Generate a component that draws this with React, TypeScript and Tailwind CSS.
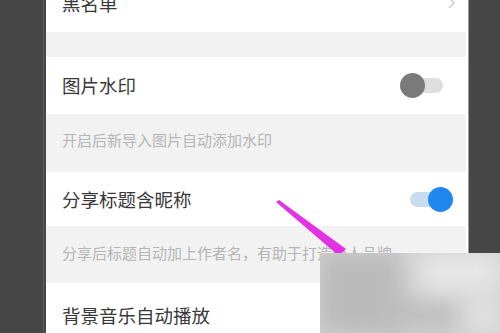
import React from 'react';

function Toggle({ on }: { on: boolean }) {
  if (on) {
    return (
      <div className="relative w-[43px] h-[25px] flex items-center">
        <div className="w-[36px] h-[15px] rounded-full bg-[#c9dcee]" />
        <div className="absolute right-0 top-0 w-[25px] h-[25px] rounded-full bg-[#1f87f0]" />
      </div>
    );
  }
  return (
    <div className="relative w-[43px] h-[25px] flex items-center justify-end">
      <div className="w-[35px] h-[15px] rounded-full bg-[#dedede]" />
      <div className="absolute left-0 top-0 w-[25px] h-[25px] rounded-full bg-[#7a7a7a]" />
    </div>
  );
}

export default function App() {
  return (
    <div
      className="relative w-[500px] h-[333px] overflow-hidden bg-[#464646] flex"
      style={{ fontFamily: '"Noto Sans CJK SC", "Noto Sans", sans-serif' }}
    >
      <div className="w-[43px]" />
      <div className="w-px bg-[#5e5e5e]" />
      <div className="w-[2px]" />

      {/* settings panel */}
      <div className="w-[420px] flex flex-col bg-[#f2f2f2]">
        <div className="h-[32px] bg-white flex items-start justify-between pl-[16px] pr-[10px]">
          <span className="text-[18.5px] leading-none text-[#383838] -mt-[6px]">黑名单</span>
          <svg width="8" height="12" viewBox="0 0 8 12" className="-mt-[3px]">
            <path d="M1 1l5 5-5 5" fill="none" stroke="#cfcfcf" strokeWidth="1.5" />
          </svg>
        </div>
        <div className="h-[25px]" />

        <div className="h-[57px] bg-white flex items-center justify-between pl-[16px] pr-[23px]">
          <span className="text-[18.5px] leading-none text-[#383838]">图片水印</span>
          <Toggle on={false} />
        </div>
        <div className="h-[58px] pl-[16px] pt-[13px]">
          <span className="text-[15px] leading-none text-[#b5b5b5]">开启后新导入图片自动添加水印</span>
        </div>

        <div className="h-[54px] bg-white flex items-center justify-between pl-[16px] pr-[13px]">
          <span className="text-[18.5px] leading-none text-[#383838]">分享标题含昵称</span>
          <Toggle on={true} />
        </div>
        <div className="h-[57px] pl-[16px] pt-[14px]">
          <span className="text-[15px] leading-none text-[#b5b5b5]">分享后标题自动加上作者名，有助于打造个人品牌</span>
        </div>

        <div className="flex-1 bg-white pl-[16px] pt-[21px]">
          <span className="text-[18.5px] leading-none text-[#383838]">背景音乐自动播放</span>
        </div>
      </div>

      <div className="w-[2px] bg-white" />
      <div className="w-px bg-[#9c9c9c]" />
      <div className="flex-1" />

      {/* pointer arrow drawn on the screenshot */}
      <svg className="absolute left-0 top-0" width="500" height="333" viewBox="0 0 500 333">
        <polygon points="276,202 279,200 346,249 339,256" fill="#e01ee0" opacity="0.9" />
      </svg>

      {/* blurred watermark */}
      <div className="absolute left-[320px] top-[253px] w-[180px] h-[80px] bg-[#d2d2d2] overflow-hidden">
        <div className="absolute left-0 top-0 w-[80px] h-[80px] bg-[#b9b9b9] blur-md" />
        <div className="absolute left-[60px] top-[45px] w-[80px] h-[30px] bg-[#bdbdbd] blur-md" />
        <div className="absolute left-[100px] top-[0px] w-[80px] h-[40px] bg-[#e8e8e8] blur-md" />
        <div className="absolute left-[145px] top-[45px] w-[35px] h-[35px] bg-[#e2e2e2] blur-md" />
      </div>
    </div>
  );
}
